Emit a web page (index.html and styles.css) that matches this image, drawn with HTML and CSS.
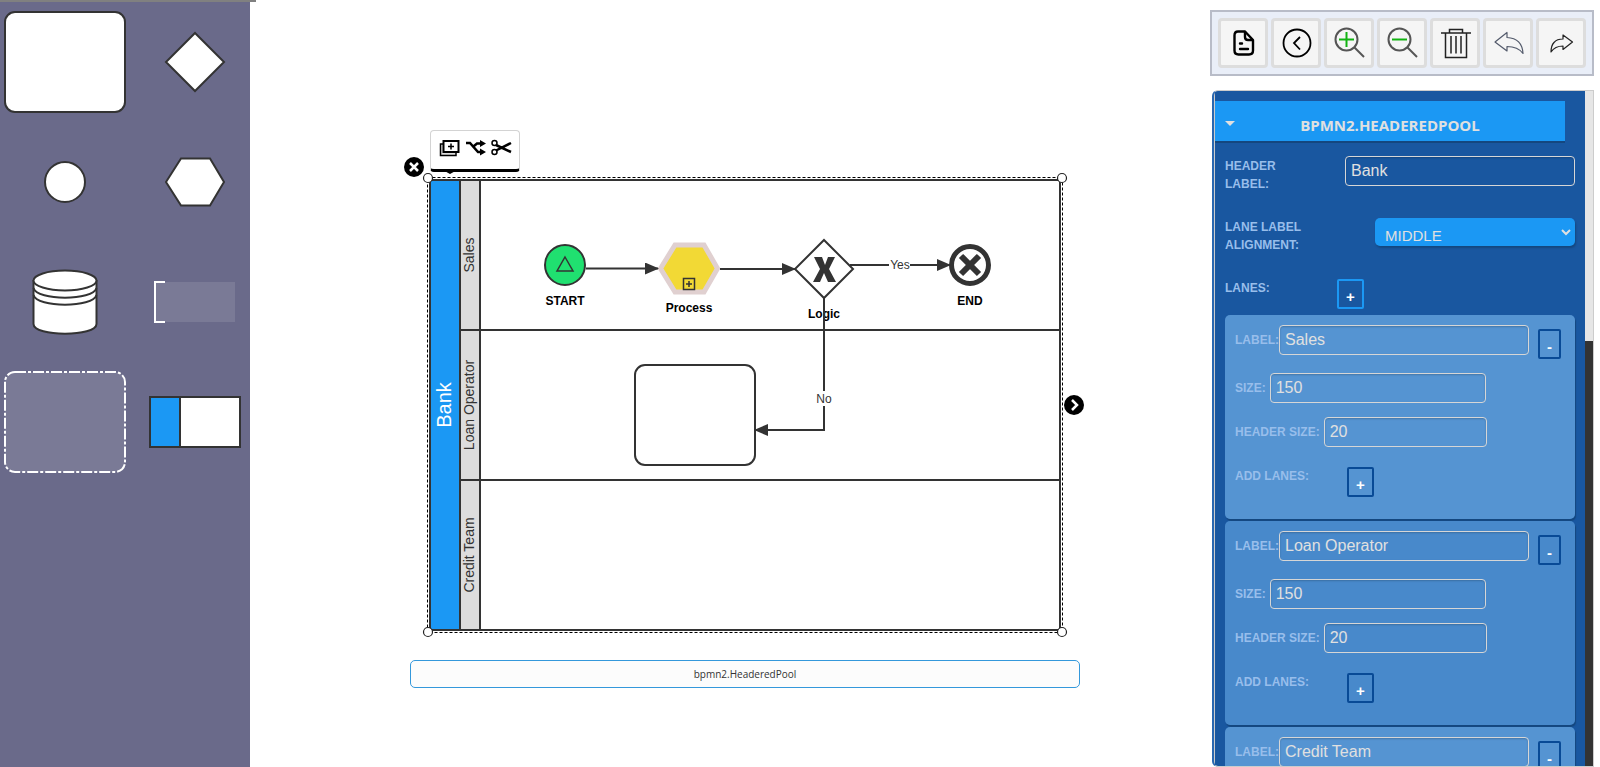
FILE: index.html
```html
<!DOCTYPE html>
<html lang="en">
<head>
<meta charset="utf-8">
<title>BPMN editor</title>
<link rel="stylesheet" href="styles.css">
</head>
<body>
<div class="app">
  <aside class="palette" aria-label="Shapes">
    <button class="shape" aria-label="Activity"><svg width="130" height="120"><rect class="node" x="5" y="10" width="120" height="100" rx="10"/></svg></button>
    <button class="shape" aria-label="Gateway"><svg width="120" height="120"><path class="node" d="M65 31 94 60 65 89 36 60Z"/></svg></button>
    <button class="shape" aria-label="Event"><svg width="130" height="120"><circle class="node" cx="65" cy="60" r="20"/></svg></button>
    <button class="shape" aria-label="Conversation"><svg width="120" height="120"><path class="node" d="M36 60 51 36.500H80L94 60 80 83.500H51Z"/></svg></button>
    <button class="shape" aria-label="Data store"><svg width="130" height="120"><path class="node" d="M33.500 38V82C33.500 95 96.500 95 96.500 82V38"/><ellipse class="node" cx="65" cy="38.500" rx="31.500" ry="10"/><path class="line" d="M33.500 46C37 59 93 59 96.500 46M33.500 53C37 66 93 66 96.500 53"/></svg></button>
    <button class="shape" aria-label="Annotation"><svg width="120" height="120"><rect class="ghost" x="25" y="40" width="80" height="40"/><path class="bracket" d="M35 40H25V80H35"/></svg></button>
    <button class="shape" aria-label="Group"><svg width="130" height="120"><rect class="ghost dashed" x="5" y="10" width="120" height="100" rx="10"/></svg></button>
    <button class="shape" aria-label="Pool"><svg width="120" height="120"><rect class="node" x="20" y="35" width="90" height="50"/><rect class="pool-head" x="20" y="35" width="30" height="50"/></svg></button>
  </aside>

  <main class="workspace">
    <div class="paper">
      <svg class="diagram" width="700" height="520" viewBox="400 120 700 520">
        <defs>
          <marker id="arrow" viewBox="0 0 14 12" refX="13" refY="6" markerWidth="14" markerHeight="12" markerUnits="userSpaceOnUse" orient="auto"><path d="M0 0 14 6 0 12Z" fill="#333"/></marker>
        </defs>
        <rect class="node" x="430" y="180" width="630" height="450"/>
        <rect class="pool-head" x="430" y="180" width="30" height="450"/>
        <rect class="lane-head" x="460" y="180" width="20" height="450"/>
        <path class="line" d="M460 330H1060M460 480H1060"/>
        <text class="pool-title" transform="translate(451 405) rotate(-90)">Bank</text>
        <text class="lane-title" transform="translate(474 255) rotate(-90)">Sales</text>
        <text class="lane-title" transform="translate(474 405) rotate(-90)">Loan Operator</text>
        <text class="lane-title" transform="translate(474 555) rotate(-90)">Credit Team</text>

        <circle class="node start" cx="565" cy="265" r="20"/>
        <path class="line thin" d="M565 257 573 271H557Z"/>
        <text class="caption" x="565" y="305">START</text>

        <path class="process" d="M660.500 268.500 675 245H704L717.500 268.500 704 292H675Z"/>
        <path class="line thin" d="M683.500 278.500H694.500V289.500H683.500ZM686 284H692M689 281V287"/>
        <text class="caption" x="689" y="312">Process</text>

        <path class="node" d="M824 240 853 269 824 298 795 269Z"/>
        <path fill="#333" d="M814 257H822L825 265 828 257H835L829 269 836 282H828L824 273 820 282H813L820 269Z"/>
        <text class="caption" x="824" y="318">Logic</text>

        <circle class="end" cx="970" cy="265" r="18.500"/>
        <path class="end-cross" d="M961 256 979 274M979 256 961 274"/>
        <text class="caption" x="970" y="305">END</text>

        <rect class="node" x="635" y="365" width="120" height="100" rx="10"/>

        <path class="line" marker-end="url(#arrow)" d="M586 268.500H658"/>
        <path class="line" marker-end="url(#arrow)" d="M720 269H795"/>
        <path class="line" marker-end="url(#arrow)" d="M850 265H950"/>
        <path class="line" marker-end="url(#arrow)" d="M824 298V430H755"/>
        <rect class="gap" x="889" y="257" width="21" height="16"/>
        <text class="link-label" x="900" y="269">Yes</text>
        <rect class="gap" x="815" y="391" width="18" height="15"/>
        <text class="link-label" x="824" y="403">No</text>

        <rect class="selection" x="427.500" y="177.500" width="635" height="455"/>
        <g class="handle"><circle cx="428" cy="178" r="4.500"/><circle cx="1062" cy="178" r="4.500"/><circle cx="428" cy="632" r="4.500"/><circle cx="1062" cy="632" r="4.500"/></g>
      </svg>
      <button class="knob knob-remove" aria-label="Remove"><svg width="20" height="20"><path d="M6 6 14 14M14 6 6 14"/></svg></button>
      <button class="knob knob-next" aria-label="Connect"><svg width="20" height="20"><path d="M8 5 13 10 8 15"/></svg></button>
      <div class="context-menu" role="toolbar" aria-label="Element actions">
        <button aria-label="Clone"><svg width="22" height="20"><path d="M4.500 6H1.500V17.500H17V15" fill="#ddd" stroke="#000" stroke-width="1.500"/><rect x="4.500" y="3" width="15" height="11" fill="#fff" stroke="#000" stroke-width="2"/><path d="M12 5.500V11.500M9 8.500H15" stroke="#000" stroke-width="1.500"/></svg></button>
        <button aria-label="Fork"><svg width="22" height="20"><path d="M1 5H5L13 14H16M9 8 12 5.500H16" fill="none" stroke="#000" stroke-width="2.500"/><path d="M15 2 21 5.500 15 9ZM15 10.500 21 14 15 17.500Z"/></svg></button>
        <button aria-label="Unlink"><svg width="22" height="20"><g fill="none" stroke="#000" stroke-width="1.500"><circle cx="3.500" cy="5" r="2.500"/><circle cx="3.500" cy="14" r="2.500"/></g><path d="M5 7 20 14M5 12.500 20 5" fill="none" stroke="#000" stroke-width="2.500"/></svg></button>
      </div>
    </div>
    <div class="status">bpmn2.HeaderedPool</div>
  </main>

  <section class="side">
    <div class="toolbar" role="toolbar" aria-label="Editor tools">
      <button aria-label="New"><svg viewBox="3 3 44 44" fill="none" stroke="#000" stroke-width="2.400" stroke-linecap="round" stroke-linejoin="round"><path d="M27 13.500H20Q16.500 13.500 16.500 17.500V32.500Q16.500 36.500 20.500 36.500H31Q35 36.500 35 32.500V22Z"/><path d="M27 14V19Q27 22 30 22H34M22 25.500H24M22 31H30"/></svg></button>
      <button aria-label="Back"><svg viewBox="3 3 44 44" fill="none" stroke="#000" stroke-width="1.800"><circle cx="26" cy="25" r="13.500"/><path d="M29 19 23 25 29 31.500"/></svg></button>
      <button aria-label="Zoom in"><svg viewBox="3 3 44 44" fill="none" stroke="#555" stroke-width="2"><circle cx="22.500" cy="21.500" r="11"/><path d="M30.500 29.500 40 39"/><path stroke="#12b312" d="M15 21.500H30M22.500 14V29"/></svg></button>
      <button aria-label="Zoom out"><svg viewBox="3 3 44 44" fill="none" stroke="#555" stroke-width="2"><circle cx="22.500" cy="21.500" r="11"/><path d="M30.500 29.500 40 39"/><path stroke="#12b312" d="M15 21.500H30"/></svg></button>
      <button aria-label="Clear"><svg viewBox="3 3 44 44" fill="none" stroke="#222" stroke-width="1.500"><path d="M11 15H41M19.500 15V11.500H32.500V15M15.500 15V39.500H36.500V15M21 18V35.500M26 18V35.500M31 18V35.500"/></svg></button>
      <button aria-label="Undo"><svg viewBox="3 3 44 44" fill="none" stroke="#535a6b" stroke-width="1.200" stroke-linejoin="round"><path d="M12 24 24 14.500V19.500C34 20 39.500 26 40 35.500 36 30 31 28.500 24 28.500V33Z"/></svg></button>
      <button aria-label="Redo"><svg viewBox="3 3 44 44" fill="none" stroke="#222" stroke-width="1.200" stroke-linejoin="round"><path d="M36.500 24 27 17V21C19 21 15 26 15 34 18 29.500 21 28 27 28V31.500Z"/></svg></button>
    </div>

    <div class="inspector">
      <form class="fields">
        <h2 class="group-title">BPMN2.HEADEREDPOOL</h2>
        <div class="row row-header">
          <label for="header">HEADER LABEL:</label>
          <input id="header" value="Bank">
        </div>
        <div class="row row-align">
          <label for="align">LANE LABEL ALIGNMENT:</label>
          <span class="select-wrap"><select id="align"><option>MIDDLE</option></select><svg width="10" height="7"><path d="M1 1 5 5 9 1"/></svg></span>
        </div>
        <div class="row row-lanes">
          <span class="name">LANES:</span>
          <button type="button" class="step" aria-label="Add lane">+</button>
        </div>
        <div class="lanes">
          <fieldset class="lane">
            <div class="row label-row"><label for="l1">LABEL:</label><input id="l1" value="Sales"><button type="button" class="step minus" aria-label="Remove lane">-</button></div>
            <div class="row size-row"><label for="s1">SIZE:</label><input id="s1" value="150"></div>
            <div class="row head-row"><label for="h1">HEADER SIZE:</label><input id="h1" value="20"></div>
            <div class="row add-row"><span class="name">ADD LANES:</span><button type="button" class="step" aria-label="Add sublane">+</button></div>
          </fieldset>
          <fieldset class="lane">
            <div class="row label-row"><label for="l2">LABEL:</label><input id="l2" value="Loan Operator"><button type="button" class="step minus" aria-label="Remove lane">-</button></div>
            <div class="row size-row"><label for="s2">SIZE:</label><input id="s2" value="150"></div>
            <div class="row head-row"><label for="h2">HEADER SIZE:</label><input id="h2" value="20"></div>
            <div class="row add-row"><span class="name">ADD LANES:</span><button type="button" class="step" aria-label="Add sublane">+</button></div>
          </fieldset>
          <fieldset class="lane">
            <div class="row label-row"><label for="l3">LABEL:</label><input id="l3" value="Credit Team"><button type="button" class="step minus" aria-label="Remove lane">-</button></div>
          </fieldset>
        </div>
      </form>
      <div class="scroll" aria-hidden="true"><div class="thumb"></div></div>
    </div>
  </section>
</div>
</body>
</html>
```
FILE: styles.css
```css
* { box-sizing: border-box; }
body { margin: 0; background: #fff; font-family: "Liberation Sans", Arial, sans-serif; }
button { font: inherit; padding: 0; cursor: pointer; }
svg { display: block; }
.app { display: flex; height: 100vh; overflow: hidden; }

/* palette */
.palette {
  position: relative;
  flex: none;
  display: grid;
  grid-template-columns: 130px 120px;
  grid-auto-rows: 120px;
  align-content: start;
  padding-top: 2px;
  background: #6a6a8a;
}
.palette::before { content: ""; position: absolute; top: 0; left: 0; width: 256px; height: 2px; background: #808080; }
.shape { border: 0; background: none; }

.node { fill: #fff; stroke: #333; stroke-width: 2; }
.line { fill: none; stroke: #333; stroke-width: 2; }
.thin { stroke-width: 1.5; }
.ghost { fill: #7a7a96; }
.bracket { fill: none; stroke: #fff; stroke-width: 2; }
.dashed { stroke: #fff; stroke-width: 2; stroke-dasharray: 11 2 3 2; }
.pool-head { fill: #1b98f4; stroke: #333; stroke-width: 2; }

/* diagram */
.workspace { flex: 1; min-width: 0; padding: 120px 130px 0 150px; }
.paper { position: relative; }
.diagram { overflow: visible; }
.lane-head { fill: #ddd; stroke: #333; stroke-width: 2; }
.pool-title, .lane-title, .caption, .link-label { font-family: "Liberation Sans", Arial, sans-serif; text-anchor: middle; }
.pool-title { font-size: 20px; fill: #fff; }
.lane-title { font-size: 14px; fill: #333; }
.caption { font-size: 12px; font-weight: bold; fill: #000; }
.link-label { font-size: 12px; fill: #333; }
.gap { fill: #fff; }
.start { fill: #20e070; }
.process { fill: #f2d935; stroke: #e0d0d0; stroke-width: 5; }
.end { fill: #fff; stroke: #333; stroke-width: 5; }
.end-cross { stroke: #333; stroke-width: 6; }
.selection { fill: none; stroke: #000; stroke-dasharray: 3 2; }
.handle { fill: #fff; stroke: #222; stroke-width: 1.2; }
.knob { position: absolute; width: 20px; height: 20px; border: 0; border-radius: 50%; background: #000; }
.knob path { fill: none; stroke: #fff; stroke-width: 2.5; }
.knob-remove { left: 4px; top: 37px; }
.knob-next { left: 664px; top: 275px; }
.context-menu {
  position: absolute;
  left: 30px;
  top: 10px;
  display: flex;
  gap: 4px;
  padding: 6px 6px 10px 8px;
  border: 1px solid #d3d3d3;
  border-bottom: 3px solid #000;
  border-radius: 4px;
  background: #fff;
}
.context-menu::after { content: ""; position: absolute; left: 10px; bottom: -5px; border: solid transparent; border-width: 5px 9px 0; border-top-color: #000; }
.context-menu button { border: 0; background: none; height: 22px; }
.status {
  margin: 20px 0 0 10px;
  padding: 0 10px;
  border: 1px solid #3498db;
  border-radius: 5px;
  background: #fcfcfc;
  color: #333;
  font: 10px/26px "Open Sans", sans-serif;
  text-align: center;
}

/* toolbar */
.side { flex: none; width: 390px; display: flex; flex-direction: column; gap: 14px; padding: 10px 6px 0 0; }
.toolbar { display: flex; gap: 3px; padding: 6px; border: 2px solid #b8bcc8; background: #e9eef8; }
.toolbar button { flex: 1; height: 50px; border: 3px solid #ddd; border-radius: 4px; background: #f5f5f5; }
.toolbar svg { width: 44px; height: 44px; }

/* inspector */
.inspector {
  flex: 1;
  min-height: 0;
  display: flex;
  overflow: hidden;
  margin-left: 2px;
  border: 1px solid #ccc;
  border-left: 2px solid #2967b0;
  border-radius: 6px 0 0 6px;
  background: #1957a0;
}
.fields { flex: 1; min-width: 0; border-left: 1px solid #ccc; padding-top: 10px; }
.group-title {
  position: relative;
  margin: 0 20px 0 0;
  padding-top: 8px;
  background: #1b98f4;
  box-shadow: 0 2px #14477f;
  color: #e0e0e0;
  font: bold 15px/32px "Open Sans", sans-serif;
  text-align: center;
}
.group-title::before { content: ""; position: absolute; left: 10px; top: 20px; border: solid transparent; border-width: 5px 5px 0; border-top-color: #e0e0e0; }
.row { display: flex; }
label, .name { color: #98beeb; font-size: 12px; font-weight: bold; line-height: 18px; white-space: nowrap; }
input {
  width: 100%;
  min-width: 0;
  height: 30px;
  padding: 0 5px;
  border: 1px solid #d6d6d6;
  border-radius: 4px;
  background: transparent;
  box-shadow: inset 0 1px 2px rgba(0, 0, 0, .2);
  color: #e0e0e0;
  font: 16px "Liberation Sans", Arial, sans-serif;
}
.row-header, .row-align, .row-lanes { padding: 0 10px; }
.row-header { margin-top: 15px; }
.row-header label { flex: none; width: 120px; padding-right: 50px; padding-top: 1px; white-space: normal; }
.row-align { margin-top: 25px; }
.row-align label { flex: none; width: 150px; padding-right: 40px; white-space: normal; }
.select-wrap { flex: 1; position: relative; }
.select-wrap svg { position: absolute; right: 4px; top: 11px; fill: none; stroke: #e0e0e0; stroke-width: 2; pointer-events: none; }
select {
  appearance: none;
  width: 100%;
  height: 28px;
  padding: 6px 20px 0 10px;
  border: 0;
  border-radius: 5px;
  background: #1b98f4;
  box-shadow: 1px 2px 2px #14477f;
  color: #e0e0e0;
  font: 15px "Liberation Sans", Arial, sans-serif;
}
.row-lanes { margin-top: 25px; }
.row-lanes .name { width: 112px; }
.step {
  width: 27px;
  height: 30px;
  border: 2px solid #1b98f4;
  border-radius: 2px;
  background: none;
  color: #fff;
  font-size: 15px;
  font-weight: bold;
  padding-top: 4px;
}
.lanes { display: flex; flex-direction: column; gap: 2px; margin: 6px 10px 0; }
.lane { min-width: 0; margin: 0; padding: 10px 10px 22px; border: 0; border-radius: 5px; background: #5594d2; box-shadow: 1px 2px 1px #14477f; }
.lane:nth-child(even) { background: #4889cb; }
.lane label { flex: none; line-height: 30px; }
.lane .step { flex: none; border-color: #084a96; }
.label-row { gap: 0; padding-right: 4px; }
.label-row .step { width: 23px; margin: 4px 0 -4px 9px; }
.size-row { gap: 4px; margin-top: 18px; padding-right: 79px; }
.head-row { gap: 4px; margin-top: 14px; padding-right: 78px; }
.add-row { margin-top: 20px; }
.add-row .name { width: 112px; }
.scroll { flex: none; width: 8px; background: #333; }
.thumb { height: 37%; background: #e6e6e6; }
```
